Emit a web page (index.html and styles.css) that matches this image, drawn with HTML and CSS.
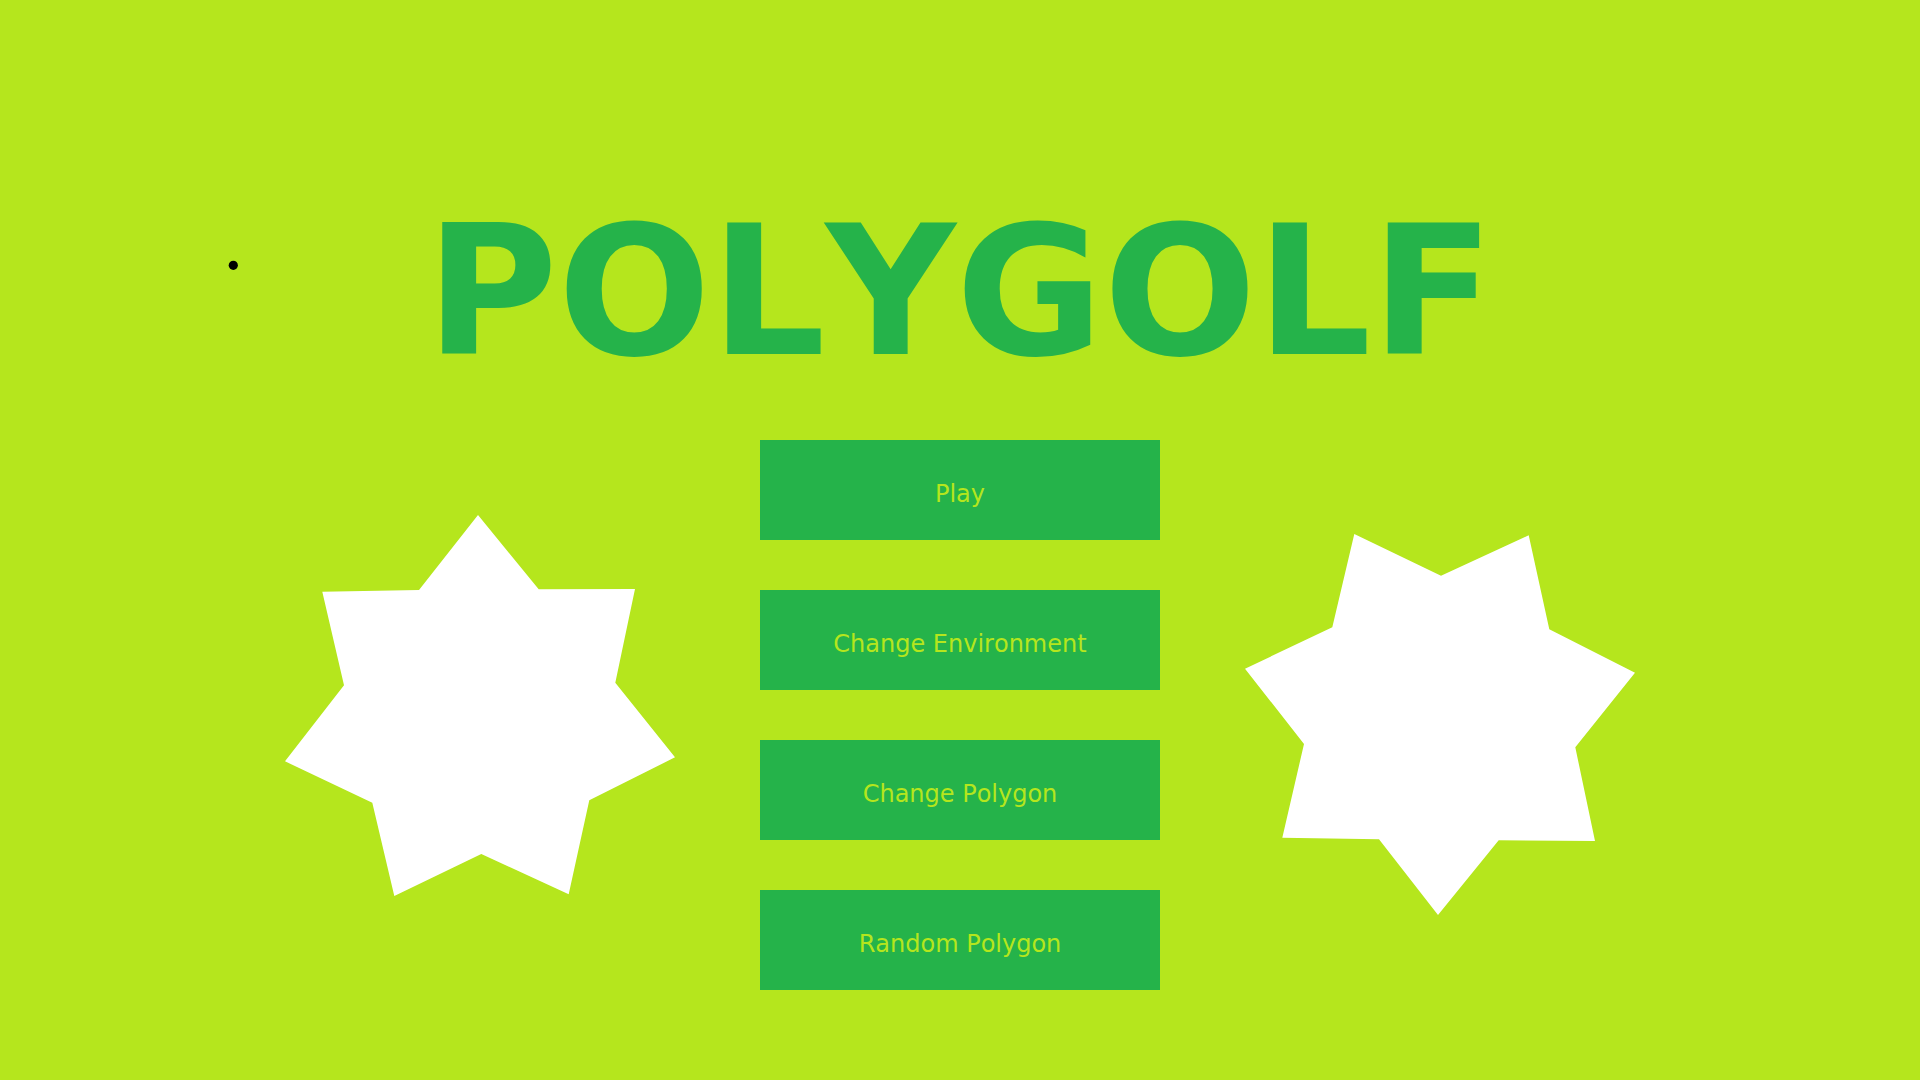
FILE: index.html
```html
<!DOCTYPE html>
<html lang="en">
<head>
<meta charset="utf-8">
<title>Polygolf</title>
<link rel="stylesheet" href="styles.css">
</head>
<body>
<svg class="canvas" width="1920" height="1080" viewBox="0 0 1920 1080" aria-hidden="true">
  <circle cx="233.3" cy="265.3" r="4.6" fill="#000"/>
  <polygon fill="#fff" points="478,515 538.7,589.3 635,589 615.3,682.7 675,757.3 589.3,800.3 568.7,894.3 481.3,854 394.3,896 372.3,802.7 285,761.3 344,685.3 322.3,591.7 419,590"/>
  <polygon fill="#fff" points="1354.3,534 1441,575.7 1528.7,535.3 1549.3,629.3 1635,672.7 1575.3,747.3 1595,841 1498.7,840.3 1438,915 1379,839.3 1282.3,837.7 1304,744 1245,668.7 1332.3,627.3"/>
</svg>
<main class="menu">
  <h1 class="title">POLYGOLF</h1>
  <div class="buttons">
    <button class="btn">Play</button>
    <button class="btn">Change Environment</button>
    <button class="btn">Change Polygon</button>
    <button class="btn">Random Polygon</button>
  </div>
</main>
</body>
</html>
```
FILE: styles.css
```css
html, body {
  margin: 0;
  padding: 0;
}
body {
  width: 1920px;
  height: 1080px;
  background: #b5e61d;
  overflow: hidden;
  position: relative;
  font-family: "DejaVu Sans", sans-serif;
}
.canvas {
  position: absolute;
  left: 0;
  top: 0;
}
.menu {
  position: relative;
  display: flex;
  flex-direction: column;
  align-items: center;
  padding-top: 187px;
}
.title {
  margin: 0;
  font-family: "DejaVu Sans", sans-serif;
  font-weight: bold;
  font-size: 180px;
  line-height: 210px;
  height: 210px;
  color: #25b34a;
  font-kerning: none;
}
.buttons {
  margin-top: 43px;
  display: flex;
  flex-direction: column;
  gap: 50px;
}
.btn {
  width: 400px;
  height: 100px;
  border: none;
  margin: 0;
  padding: 8px 0 0 0;
  background: #25b34a;
  color: #b5e61d;
  font-family: "DejaVu Sans", sans-serif;
  font-size: 24px;
  font-kerning: none;
  display: flex;
  align-items: center;
  justify-content: center;
  box-sizing: border-box;
}
```
